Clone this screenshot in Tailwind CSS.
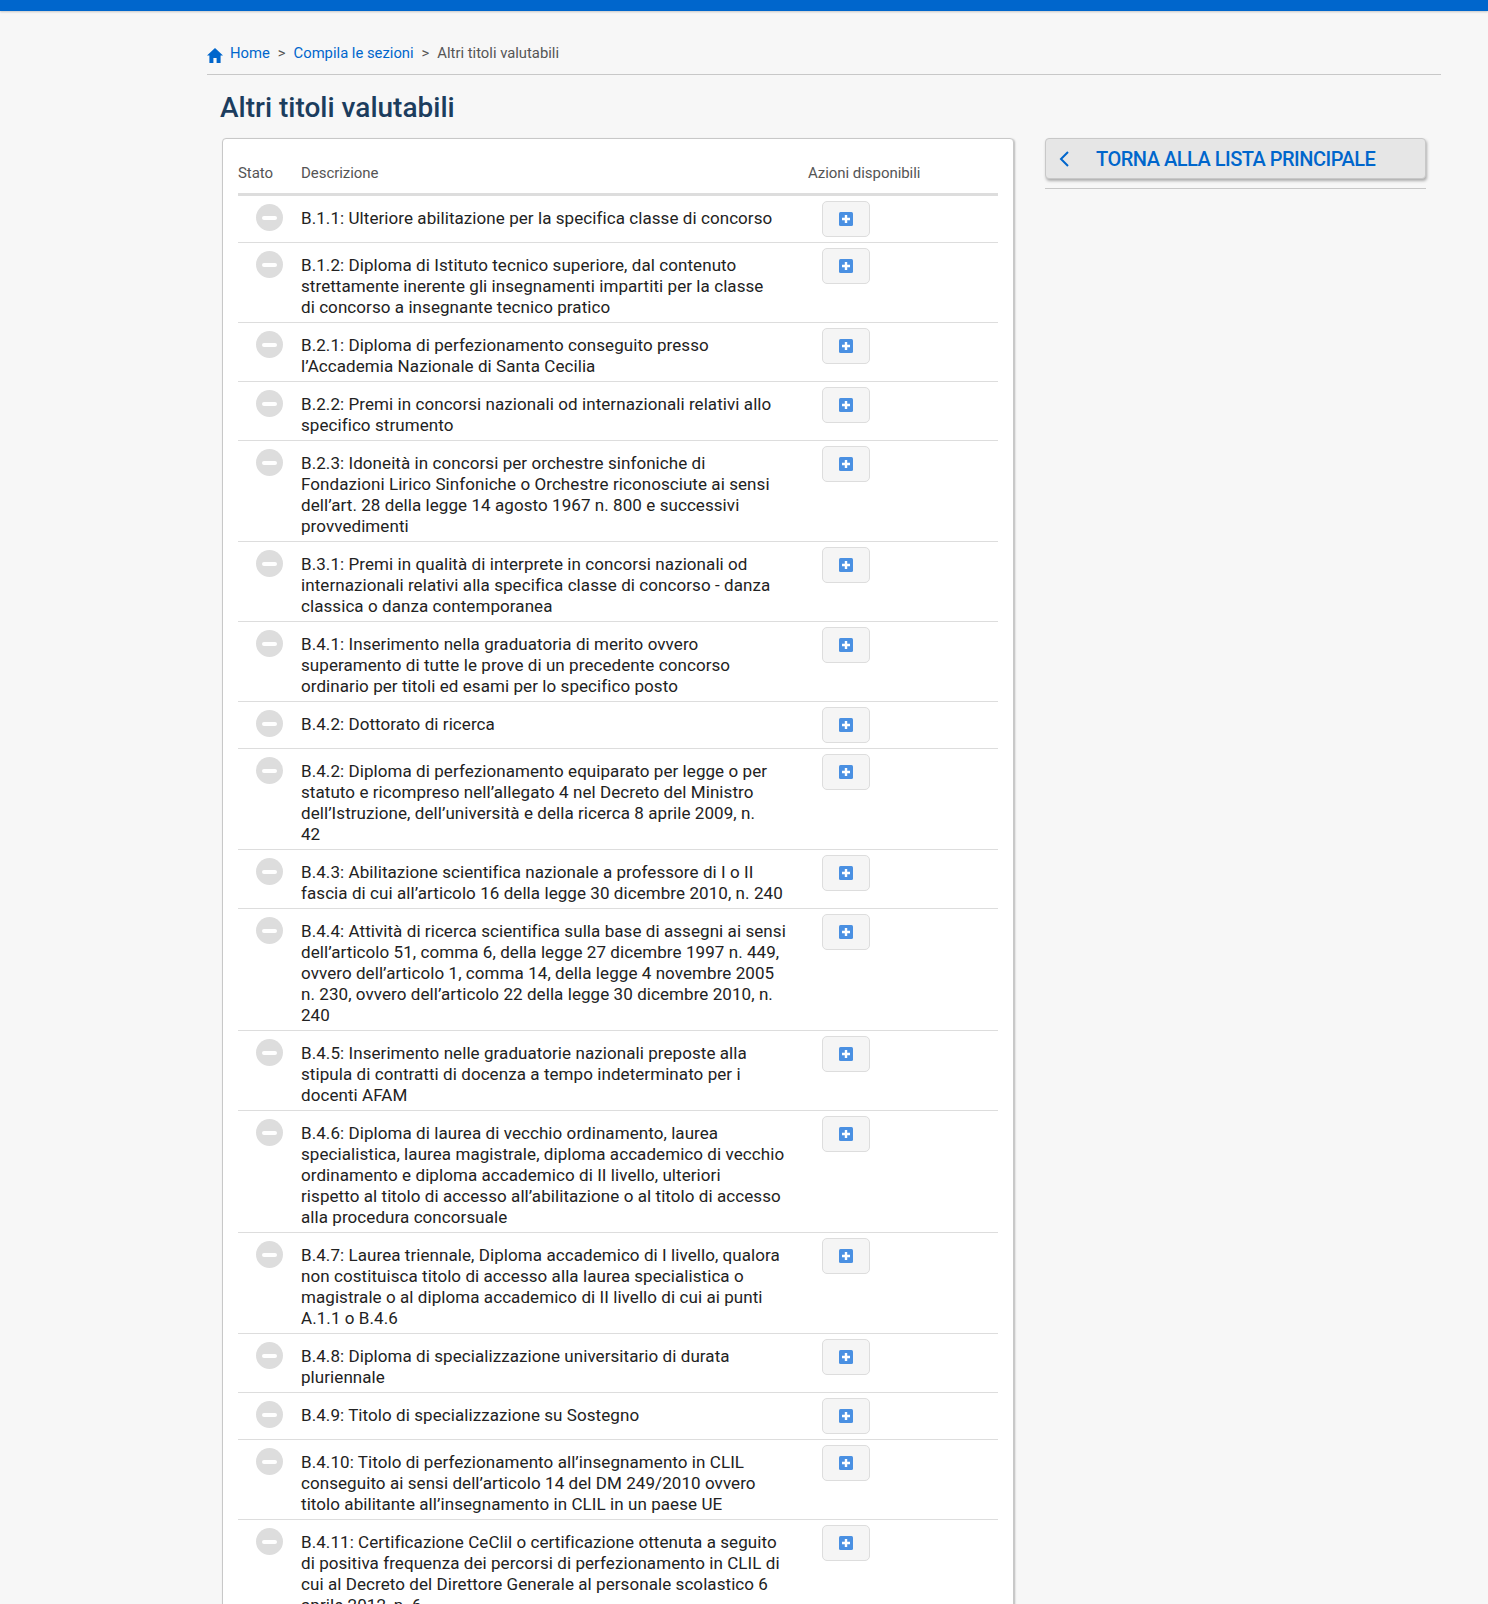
<!DOCTYPE html>
<html lang="it"><head><meta charset="utf-8"><script src="https://cdn.jsdelivr.net/npm/@tailwindcss/browser@4"></script></head>
<body class="m-0 bg-[#f7f7f7] font-['Roboto',sans-serif] text-[#222]">
<div class="h-[1604px] overflow-hidden">
<div class="h-[11px] bg-[#0066cc] shadow-[0_1px_2px_rgba(0,0,0,0.2)]"></div>
<main class="ml-[207px] w-[1234px]">
<nav class="h-[64px] border-b border-[#c8c8c8] flex items-center gap-[7px] pt-[21px] text-[14.8px] text-[#555]">
<svg class="w-[16px] h-[15px] mt-[4px]" viewBox="0 0 16 15"><path fill="#0066cc" d="M8 0 L16 7.5 H13.6 V15 H9.6 V10 H6.4 V15 H2.4 V7.5 H0 Z"/></svg>
<a class="text-[#0066cc]">Home</a><span class="mx-[1px]">&gt;</span><a class="text-[#0066cc]">Compila le sezioni</a><span class="mx-[1px]">&gt;</span><span>Altri titoli valutabili</span>
</nav>
<h1 class="ml-[13px] mt-[17px] h-[46px] text-[28px] leading-[32px] font-medium text-[#1c3d5e]">Altri titoli valutabili</h1>
<div class="flex items-start">
<section class="ml-[15px] w-[792px] rounded-[4px] border border-[#c8c8c8] bg-white px-[15px] shadow-[1px_1px_2px_rgba(0,0,0,0.25)]">
<div class="grid grid-cols-[63px_507px_1fr] h-[57px] items-end pb-[9px] border-b-[3px] border-[#ddd] text-[15px] tracking-[-0.05px] text-[#555]"><span>Stato</span><span>Descrizione</span><span>Azioni disponibili</span></div>

<div class="grid grid-cols-[63px_521px_1fr] pt-[5px] border-b border-[#ddd]"><div class="mt-[3px] ml-[18px] w-[27px] h-[27px] rounded-full bg-[#ddd] flex items-center justify-center"><span class="w-[15px] h-[4px] rounded-[2px] bg-white"></span></div><p class="mt-[7px] mb-[4px] text-[17px] leading-[21px] tracking-[0.07px] whitespace-nowrap">B.1.1: Ulteriore abilitazione per la specifica classe di concorso</p><button class="mb-[5px] w-[48px] h-[36px] rounded-[5px] border border-[#ddd] bg-[#f5f5f5] flex items-center justify-center"><svg class="w-[14px] h-[14px]" viewBox="0 0 14 14"><rect width="14" height="14" rx="1.5" fill="#4a90e2"/><path d="M7 3v8M3 7h8" stroke="#fff" stroke-width="2.4"/></svg></button></div>

<div class="grid grid-cols-[63px_521px_1fr] pt-[5px] border-b border-[#ddd]"><div class="mt-[3px] ml-[18px] w-[27px] h-[27px] rounded-full bg-[#ddd] flex items-center justify-center"><span class="w-[15px] h-[4px] rounded-[2px] bg-white"></span></div><p class="mt-[7px] mb-[4px] text-[17px] leading-[21px] tracking-[0.07px] whitespace-nowrap">B.1.2: Diploma di Istituto tecnico superiore, dal contenuto<br>strettamente inerente gli insegnamenti impartiti per la classe<br>di concorso a insegnante tecnico pratico</p><button class="mb-[5px] w-[48px] h-[36px] rounded-[5px] border border-[#ddd] bg-[#f5f5f5] flex items-center justify-center"><svg class="w-[14px] h-[14px]" viewBox="0 0 14 14"><rect width="14" height="14" rx="1.5" fill="#4a90e2"/><path d="M7 3v8M3 7h8" stroke="#fff" stroke-width="2.4"/></svg></button></div>

<div class="grid grid-cols-[63px_521px_1fr] pt-[5px] border-b border-[#ddd]"><div class="mt-[3px] ml-[18px] w-[27px] h-[27px] rounded-full bg-[#ddd] flex items-center justify-center"><span class="w-[15px] h-[4px] rounded-[2px] bg-white"></span></div><p class="mt-[7px] mb-[4px] text-[17px] leading-[21px] tracking-[0.07px] whitespace-nowrap">B.2.1: Diploma di perfezionamento conseguito presso<br>l’Accademia Nazionale di Santa Cecilia</p><button class="mb-[5px] w-[48px] h-[36px] rounded-[5px] border border-[#ddd] bg-[#f5f5f5] flex items-center justify-center"><svg class="w-[14px] h-[14px]" viewBox="0 0 14 14"><rect width="14" height="14" rx="1.5" fill="#4a90e2"/><path d="M7 3v8M3 7h8" stroke="#fff" stroke-width="2.4"/></svg></button></div>

<div class="grid grid-cols-[63px_521px_1fr] pt-[5px] border-b border-[#ddd]"><div class="mt-[3px] ml-[18px] w-[27px] h-[27px] rounded-full bg-[#ddd] flex items-center justify-center"><span class="w-[15px] h-[4px] rounded-[2px] bg-white"></span></div><p class="mt-[7px] mb-[4px] text-[17px] leading-[21px] tracking-[0.07px] whitespace-nowrap">B.2.2: Premi in concorsi nazionali od internazionali relativi allo<br>specifico strumento</p><button class="mb-[5px] w-[48px] h-[36px] rounded-[5px] border border-[#ddd] bg-[#f5f5f5] flex items-center justify-center"><svg class="w-[14px] h-[14px]" viewBox="0 0 14 14"><rect width="14" height="14" rx="1.5" fill="#4a90e2"/><path d="M7 3v8M3 7h8" stroke="#fff" stroke-width="2.4"/></svg></button></div>

<div class="grid grid-cols-[63px_521px_1fr] pt-[5px] border-b border-[#ddd]"><div class="mt-[3px] ml-[18px] w-[27px] h-[27px] rounded-full bg-[#ddd] flex items-center justify-center"><span class="w-[15px] h-[4px] rounded-[2px] bg-white"></span></div><p class="mt-[7px] mb-[4px] text-[17px] leading-[21px] tracking-[0.07px] whitespace-nowrap">B.2.3: Idoneità in concorsi per orchestre sinfoniche di<br>Fondazioni Lirico Sinfoniche o Orchestre riconosciute ai sensi<br>dell’art. 28 della legge 14 agosto 1967 n. 800 e successivi<br>provvedimenti</p><button class="mb-[5px] w-[48px] h-[36px] rounded-[5px] border border-[#ddd] bg-[#f5f5f5] flex items-center justify-center"><svg class="w-[14px] h-[14px]" viewBox="0 0 14 14"><rect width="14" height="14" rx="1.5" fill="#4a90e2"/><path d="M7 3v8M3 7h8" stroke="#fff" stroke-width="2.4"/></svg></button></div>

<div class="grid grid-cols-[63px_521px_1fr] pt-[5px] border-b border-[#ddd]"><div class="mt-[3px] ml-[18px] w-[27px] h-[27px] rounded-full bg-[#ddd] flex items-center justify-center"><span class="w-[15px] h-[4px] rounded-[2px] bg-white"></span></div><p class="mt-[7px] mb-[4px] text-[17px] leading-[21px] tracking-[0.07px] whitespace-nowrap">B.3.1: Premi in qualità di interprete in concorsi nazionali od<br>internazionali relativi alla specifica classe di concorso - danza<br>classica o danza contemporanea</p><button class="mb-[5px] w-[48px] h-[36px] rounded-[5px] border border-[#ddd] bg-[#f5f5f5] flex items-center justify-center"><svg class="w-[14px] h-[14px]" viewBox="0 0 14 14"><rect width="14" height="14" rx="1.5" fill="#4a90e2"/><path d="M7 3v8M3 7h8" stroke="#fff" stroke-width="2.4"/></svg></button></div>

<div class="grid grid-cols-[63px_521px_1fr] pt-[5px] border-b border-[#ddd]"><div class="mt-[3px] ml-[18px] w-[27px] h-[27px] rounded-full bg-[#ddd] flex items-center justify-center"><span class="w-[15px] h-[4px] rounded-[2px] bg-white"></span></div><p class="mt-[7px] mb-[4px] text-[17px] leading-[21px] tracking-[0.07px] whitespace-nowrap">B.4.1: Inserimento nella graduatoria di merito ovvero<br>superamento di tutte le prove di un precedente concorso<br>ordinario per titoli ed esami per lo specifico posto</p><button class="mb-[5px] w-[48px] h-[36px] rounded-[5px] border border-[#ddd] bg-[#f5f5f5] flex items-center justify-center"><svg class="w-[14px] h-[14px]" viewBox="0 0 14 14"><rect width="14" height="14" rx="1.5" fill="#4a90e2"/><path d="M7 3v8M3 7h8" stroke="#fff" stroke-width="2.4"/></svg></button></div>

<div class="grid grid-cols-[63px_521px_1fr] pt-[5px] border-b border-[#ddd]"><div class="mt-[3px] ml-[18px] w-[27px] h-[27px] rounded-full bg-[#ddd] flex items-center justify-center"><span class="w-[15px] h-[4px] rounded-[2px] bg-white"></span></div><p class="mt-[7px] mb-[4px] text-[17px] leading-[21px] tracking-[0.07px] whitespace-nowrap">B.4.2: Dottorato di ricerca</p><button class="mb-[5px] w-[48px] h-[36px] rounded-[5px] border border-[#ddd] bg-[#f5f5f5] flex items-center justify-center"><svg class="w-[14px] h-[14px]" viewBox="0 0 14 14"><rect width="14" height="14" rx="1.5" fill="#4a90e2"/><path d="M7 3v8M3 7h8" stroke="#fff" stroke-width="2.4"/></svg></button></div>

<div class="grid grid-cols-[63px_521px_1fr] pt-[5px] border-b border-[#ddd]"><div class="mt-[3px] ml-[18px] w-[27px] h-[27px] rounded-full bg-[#ddd] flex items-center justify-center"><span class="w-[15px] h-[4px] rounded-[2px] bg-white"></span></div><p class="mt-[7px] mb-[4px] text-[17px] leading-[21px] tracking-[0.07px] whitespace-nowrap">B.4.2: Diploma di perfezionamento equiparato per legge o per<br>statuto e ricompreso nell’allegato 4 nel Decreto del Ministro<br>dell’Istruzione, dell’università e della ricerca 8 aprile 2009, n.<br>42</p><button class="mb-[5px] w-[48px] h-[36px] rounded-[5px] border border-[#ddd] bg-[#f5f5f5] flex items-center justify-center"><svg class="w-[14px] h-[14px]" viewBox="0 0 14 14"><rect width="14" height="14" rx="1.5" fill="#4a90e2"/><path d="M7 3v8M3 7h8" stroke="#fff" stroke-width="2.4"/></svg></button></div>

<div class="grid grid-cols-[63px_521px_1fr] pt-[5px] border-b border-[#ddd]"><div class="mt-[3px] ml-[18px] w-[27px] h-[27px] rounded-full bg-[#ddd] flex items-center justify-center"><span class="w-[15px] h-[4px] rounded-[2px] bg-white"></span></div><p class="mt-[7px] mb-[4px] text-[17px] leading-[21px] tracking-[0.07px] whitespace-nowrap">B.4.3: Abilitazione scientifica nazionale a professore di I o II<br>fascia di cui all’articolo 16 della legge 30 dicembre 2010, n. 240</p><button class="mb-[5px] w-[48px] h-[36px] rounded-[5px] border border-[#ddd] bg-[#f5f5f5] flex items-center justify-center"><svg class="w-[14px] h-[14px]" viewBox="0 0 14 14"><rect width="14" height="14" rx="1.5" fill="#4a90e2"/><path d="M7 3v8M3 7h8" stroke="#fff" stroke-width="2.4"/></svg></button></div>

<div class="grid grid-cols-[63px_521px_1fr] pt-[5px] border-b border-[#ddd]"><div class="mt-[3px] ml-[18px] w-[27px] h-[27px] rounded-full bg-[#ddd] flex items-center justify-center"><span class="w-[15px] h-[4px] rounded-[2px] bg-white"></span></div><p class="mt-[7px] mb-[4px] text-[17px] leading-[21px] tracking-[0.07px] whitespace-nowrap">B.4.4: Attività di ricerca scientifica sulla base di assegni ai sensi<br>dell’articolo 51, comma 6, della legge 27 dicembre 1997 n. 449,<br>ovvero dell’articolo 1, comma 14, della legge 4 novembre 2005<br>n. 230, ovvero dell’articolo 22 della legge 30 dicembre 2010, n.<br>240</p><button class="mb-[5px] w-[48px] h-[36px] rounded-[5px] border border-[#ddd] bg-[#f5f5f5] flex items-center justify-center"><svg class="w-[14px] h-[14px]" viewBox="0 0 14 14"><rect width="14" height="14" rx="1.5" fill="#4a90e2"/><path d="M7 3v8M3 7h8" stroke="#fff" stroke-width="2.4"/></svg></button></div>

<div class="grid grid-cols-[63px_521px_1fr] pt-[5px] border-b border-[#ddd]"><div class="mt-[3px] ml-[18px] w-[27px] h-[27px] rounded-full bg-[#ddd] flex items-center justify-center"><span class="w-[15px] h-[4px] rounded-[2px] bg-white"></span></div><p class="mt-[7px] mb-[4px] text-[17px] leading-[21px] tracking-[0.07px] whitespace-nowrap">B.4.5: Inserimento nelle graduatorie nazionali preposte alla<br>stipula di contratti di docenza a tempo indeterminato per i<br>docenti AFAM</p><button class="mb-[5px] w-[48px] h-[36px] rounded-[5px] border border-[#ddd] bg-[#f5f5f5] flex items-center justify-center"><svg class="w-[14px] h-[14px]" viewBox="0 0 14 14"><rect width="14" height="14" rx="1.5" fill="#4a90e2"/><path d="M7 3v8M3 7h8" stroke="#fff" stroke-width="2.4"/></svg></button></div>

<div class="grid grid-cols-[63px_521px_1fr] pt-[5px] border-b border-[#ddd]"><div class="mt-[3px] ml-[18px] w-[27px] h-[27px] rounded-full bg-[#ddd] flex items-center justify-center"><span class="w-[15px] h-[4px] rounded-[2px] bg-white"></span></div><p class="mt-[7px] mb-[4px] text-[17px] leading-[21px] tracking-[0.07px] whitespace-nowrap">B.4.6: Diploma di laurea di vecchio ordinamento, laurea<br>specialistica, laurea magistrale, diploma accademico di vecchio<br>ordinamento e diploma accademico di II livello, ulteriori<br>rispetto al titolo di accesso all’abilitazione o al titolo di accesso<br>alla procedura concorsuale</p><button class="mb-[5px] w-[48px] h-[36px] rounded-[5px] border border-[#ddd] bg-[#f5f5f5] flex items-center justify-center"><svg class="w-[14px] h-[14px]" viewBox="0 0 14 14"><rect width="14" height="14" rx="1.5" fill="#4a90e2"/><path d="M7 3v8M3 7h8" stroke="#fff" stroke-width="2.4"/></svg></button></div>

<div class="grid grid-cols-[63px_521px_1fr] pt-[5px] border-b border-[#ddd]"><div class="mt-[3px] ml-[18px] w-[27px] h-[27px] rounded-full bg-[#ddd] flex items-center justify-center"><span class="w-[15px] h-[4px] rounded-[2px] bg-white"></span></div><p class="mt-[7px] mb-[4px] text-[17px] leading-[21px] tracking-[0.07px] whitespace-nowrap">B.4.7: Laurea triennale, Diploma accademico di I livello, qualora<br>non costituisca titolo di accesso alla laurea specialistica o<br>magistrale o al diploma accademico di II livello di cui ai punti<br>A.1.1 o B.4.6</p><button class="mb-[5px] w-[48px] h-[36px] rounded-[5px] border border-[#ddd] bg-[#f5f5f5] flex items-center justify-center"><svg class="w-[14px] h-[14px]" viewBox="0 0 14 14"><rect width="14" height="14" rx="1.5" fill="#4a90e2"/><path d="M7 3v8M3 7h8" stroke="#fff" stroke-width="2.4"/></svg></button></div>

<div class="grid grid-cols-[63px_521px_1fr] pt-[5px] border-b border-[#ddd]"><div class="mt-[3px] ml-[18px] w-[27px] h-[27px] rounded-full bg-[#ddd] flex items-center justify-center"><span class="w-[15px] h-[4px] rounded-[2px] bg-white"></span></div><p class="mt-[7px] mb-[4px] text-[17px] leading-[21px] tracking-[0.07px] whitespace-nowrap">B.4.8: Diploma di specializzazione universitario di durata<br>pluriennale</p><button class="mb-[5px] w-[48px] h-[36px] rounded-[5px] border border-[#ddd] bg-[#f5f5f5] flex items-center justify-center"><svg class="w-[14px] h-[14px]" viewBox="0 0 14 14"><rect width="14" height="14" rx="1.5" fill="#4a90e2"/><path d="M7 3v8M3 7h8" stroke="#fff" stroke-width="2.4"/></svg></button></div>

<div class="grid grid-cols-[63px_521px_1fr] pt-[5px] border-b border-[#ddd]"><div class="mt-[3px] ml-[18px] w-[27px] h-[27px] rounded-full bg-[#ddd] flex items-center justify-center"><span class="w-[15px] h-[4px] rounded-[2px] bg-white"></span></div><p class="mt-[7px] mb-[4px] text-[17px] leading-[21px] tracking-[0.07px] whitespace-nowrap">B.4.9: Titolo di specializzazione su Sostegno</p><button class="mb-[5px] w-[48px] h-[36px] rounded-[5px] border border-[#ddd] bg-[#f5f5f5] flex items-center justify-center"><svg class="w-[14px] h-[14px]" viewBox="0 0 14 14"><rect width="14" height="14" rx="1.5" fill="#4a90e2"/><path d="M7 3v8M3 7h8" stroke="#fff" stroke-width="2.4"/></svg></button></div>

<div class="grid grid-cols-[63px_521px_1fr] pt-[5px] border-b border-[#ddd]"><div class="mt-[3px] ml-[18px] w-[27px] h-[27px] rounded-full bg-[#ddd] flex items-center justify-center"><span class="w-[15px] h-[4px] rounded-[2px] bg-white"></span></div><p class="mt-[7px] mb-[4px] text-[17px] leading-[21px] tracking-[0.07px] whitespace-nowrap">B.4.10: Titolo di perfezionamento all’insegnamento in CLIL<br>conseguito ai sensi dell’articolo 14 del DM 249/2010 ovvero<br>titolo abilitante all’insegnamento in CLIL in un paese UE</p><button class="mb-[5px] w-[48px] h-[36px] rounded-[5px] border border-[#ddd] bg-[#f5f5f5] flex items-center justify-center"><svg class="w-[14px] h-[14px]" viewBox="0 0 14 14"><rect width="14" height="14" rx="1.5" fill="#4a90e2"/><path d="M7 3v8M3 7h8" stroke="#fff" stroke-width="2.4"/></svg></button></div>

<div class="grid grid-cols-[63px_521px_1fr] pt-[5px] border-b border-[#ddd]"><div class="mt-[3px] ml-[18px] w-[27px] h-[27px] rounded-full bg-[#ddd] flex items-center justify-center"><span class="w-[15px] h-[4px] rounded-[2px] bg-white"></span></div><p class="mt-[7px] mb-[4px] text-[17px] leading-[21px] tracking-[0.07px] whitespace-nowrap">B.4.11: Certificazione CeClil o certificazione ottenuta a seguito<br>di positiva frequenza dei percorsi di perfezionamento in CLIL di<br>cui al Decreto del Direttore Generale al personale scolastico 6<br>aprile 2012, n. 6</p><button class="mb-[5px] w-[48px] h-[36px] rounded-[5px] border border-[#ddd] bg-[#f5f5f5] flex items-center justify-center"><svg class="w-[14px] h-[14px]" viewBox="0 0 14 14"><rect width="14" height="14" rx="1.5" fill="#4a90e2"/><path d="M7 3v8M3 7h8" stroke="#fff" stroke-width="2.4"/></svg></button></div>
</section>
<aside class="ml-[31px] w-[381px]">
<a class="flex items-center h-[41px] rounded-[4px] border border-[#c8c8c8] bg-[#e6e6e6] shadow-[1px_2px_3px_rgba(0,0,0,0.3)] text-[#0066cc] text-[20px] tracking-[-0.5px] font-medium"><svg class="ml-[13px] w-[10px] h-[16px]" viewBox="0 0 10 16" fill="none" stroke="#0066cc" stroke-width="2"><path d="M9 1 L2 8 L9 15"/></svg><span class="ml-[27px] pt-[1px] whitespace-nowrap">TORNA ALLA LISTA PRINCIPALE</span></a>
<div class="mt-[9px] border-b border-[#c8c8c8]"></div>
</aside>
</div>
</main>
</div>
</body></html>
